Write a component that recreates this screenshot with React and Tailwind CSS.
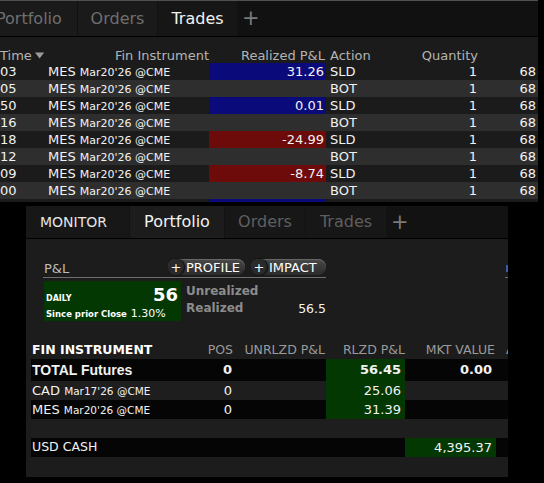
import React from "react";

const trades = [
  { time: "03", action: "SLD", pnl: "31.26", tone: "blue" },
  { time: "05", action: "BOT", pnl: "", tone: "" },
  { time: "50", action: "SLD", pnl: "0.01", tone: "blue" },
  { time: "16", action: "BOT", pnl: "", tone: "" },
  { time: "18", action: "SLD", pnl: "-24.99", tone: "red" },
  { time: "12", action: "BOT", pnl: "", tone: "" },
  { time: "09", action: "SLD", pnl: "-8.74", tone: "red" },
  { time: "00", action: "BOT", pnl: "", tone: "" },
];

const toneBg = { blue: "bg-[#0b0a7a]", red: "bg-[#6d0b0b]", "": "" };

// trades window (top, partly cut off on the left)
function TradesPanel() {
  return (
    <div className="w-[538px] h-[202px] overflow-hidden bg-[#1b1b1b]">
      <div className="flex h-[37px] gap-[1px] bg-[#111111] border-t border-t-[#505050] border-b border-b-black">
        <div className="ml-[-13px] w-[90px] flex items-center pl-[9px] bg-[#1a1a1a] text-[16px] text-[#6f6f6f]">
          Portfolio
        </div>
        <div className="w-[79px] flex items-center justify-center bg-[#1a1a1a] text-[16px] text-[#6f6f6f]">
          Orders
        </div>
        <div className="w-[79px] flex items-center justify-center bg-[#161616] text-[16px] text-[#f2f2f2]">
          Trades
        </div>
        <div className="flex items-center pl-[4px] text-[21px] text-[#7a7a7a] leading-none">
          +
        </div>
      </div>

      <div className="flex h-[26px] items-end pb-[0px] text-[13px] leading-[15px] text-[#b4b4b4]">
        <div className="w-[44px] flex items-center gap-[3px]">
          <span>Time</span>
          <svg width="11" height="7" viewBox="0 0 11 7">
            <path d="M0 0 H11 L5.5 7 Z" fill="#9a9a9a" />
          </svg>
        </div>
        <div className="w-[165px] text-right">Fin Instrument</div>
        <div className="w-[117px] text-right pr-[1px]">Realized P&amp;L</div>
        <div className="w-[94px] pl-[4px]">Action</div>
        <div className="w-[60px] text-right pr-[2px]">Quantity</div>
        <div className="w-[58px]"></div>
      </div>

      {trades.map((r, i) => (
        <div
          key={i}
          className={`flex h-[17px] items-center text-[13px] leading-[17px] text-[#f2f2f2] ${
            i % 2 === 0 ? "bg-[#1b1b1b]" : "bg-[#2e2e2e]"
          }`}
        >
          <div className="w-[44px]">{r.time}</div>
          <div className="w-[165px] pl-[4px] whitespace-nowrap">
            MES <span className="text-[11px]">Mar20'26 @CME</span>
          </div>
          <div className={`w-[117px] h-full text-right pr-[2px] ${toneBg[r.tone]}`}>{r.pnl}</div>
          <div className="w-[94px] pl-[4px]">{r.action}</div>
          <div className="w-[60px] text-right pr-[3px]">1</div>
          <div className="w-[58px] text-right pr-[2px]">68</div>
        </div>
      ))}
      <div className="flex h-[3px] bg-[#1b1b1b]">
        <div className="w-[209px]"></div>
        <div className="w-[117px] bg-[#0b0a7a]"></div>
      </div>
    </div>
  );
}

function PillButton({ label, width }) {
  return (
    <div
      className={`${width} h-[16px] flex items-center rounded-full bg-gradient-to-b from-[#4a4a4a] to-[#2b2b2b] shadow-[inset_0_1px_0_#666] text-white text-[13px] leading-none`}
    >
      <span className="w-[16px] h-[16px] flex items-center justify-center rounded-full bg-[#2a2a2a] shadow-[1px_0_2px_#000] text-[13px]">
        +
      </span>
      <span className="ml-[2px]">{label}</span>
    </div>
  );
}

const rowBase = "flex items-center text-[13px] text-[#f2f2f2]";

// portfolio window (bottom)
function PortfolioPanel() {
  return (
    <div className="mt-[4px] ml-[26px] w-[482px] h-[271px] overflow-hidden bg-[#1c1c1c]">
      <div className="flex h-[33px] gap-[1px] bg-[#121212] border-b border-b-black">
        <div className="w-[103px] flex items-center pl-[14px] bg-[#171717] text-[14px] text-[#e6e6e6]">
          MONITOR
        </div>
        <div className="w-[94px] flex items-center justify-center bg-[#1c1c1c] text-[16px] text-[#f2f2f2]">
          Portfolio
        </div>
        <div className="w-[80px] flex items-center justify-center bg-[#171717] text-[16px] text-[#5f5f5f]">
          Orders
        </div>
        <div className="w-[80px] flex items-center justify-center bg-[#171717] text-[16px] text-[#5f5f5f]">
          Trades
        </div>
        <div className="flex items-center pl-[4px] text-[21px] text-[#7a7a7a] leading-none">
          +
        </div>
      </div>

      <div className="flex mt-[20px] ml-[17px]">
        <div className="w-[283px]">
          <div className="flex h-[19px] items-center border-b border-b-[#6e6e6e]">
            <span className="text-[13px] text-[#bdbdbd] pl-[1px] pt-[1px]">P&amp;L</span>
            <div className="ml-auto flex gap-[6px] pb-[2px]">
              <PillButton label="PROFILE" width="w-[77px]" />
              <PillButton label="IMPACT" width="w-[75px]" />
            </div>
          </div>

          <div className="flex mt-[3px]">
            <div className="ml-[1px] w-[137px] h-[40px] bg-[#033803] px-[2px] pt-[5px] text-white">
              <div className="flex items-end justify-between h-[18px]">
                <span className="text-[8px] font-bold leading-none pb-[1px]">DAILY</span>
                <span className="text-[18px] font-bold leading-none pr-[1px]">56</span>
              </div>
              <div className="flex items-baseline gap-[4px] mt-[2px]">
                <span className="text-[8.5px] font-bold">Since prior Close</span>
                <span className="text-[11px]">1.30%</span>
              </div>
            </div>
            <div className="ml-[5px] flex-1 pt-[2px] text-[12px] leading-[17px]">
              <div className="font-bold text-[#8c8c8c]">Unrealized</div>
              <div className="flex justify-between">
                <span className="font-bold text-[#8c8c8c]">Realized</span>
                <span className="text-[12.5px] text-[#f2f2f2]">56.5</span>
              </div>
            </div>
          </div>
        </div>
        <div className="ml-[179px] w-[3px] h-[19px] flex items-center border-b border-b-[#6e6e6e]">
          <div className="ml-[1px] w-[2px] h-[7px] bg-[#3c5aa6]"></div>
        </div>
      </div>

      <div className="mt-[21px] pl-[5px]">
        <div className="flex h-[17px] items-center text-[12.5px] text-[#9a9a9a] whitespace-nowrap">
          <div className="w-[164px] pl-[1px] font-bold text-white">FIN INSTRUMENT</div>
          <div className="w-[41px] text-right pr-[3px]">POS</div>
          <div className="w-[90px] text-right pr-[1px]">UNRLZD P&amp;L</div>
          <div className="w-[79px] text-right">RLZD P&amp;L</div>
          <div className="w-[91px] text-right pr-[1px]">MKT VALUE</div>
          <div className="w-[12px] pl-[10px] overflow-hidden">A</div>
        </div>

        <div className={`${rowBase} h-[22px] bg-[#050505] font-bold`}>
          <div className="w-[164px] pl-[1px] font-['Liberation_Sans'] text-[14px]">TOTAL Futures</div>
          <div className="w-[41px] text-right pr-[4px]">0</div>
          <div className="w-[90px]"></div>
          <div className="w-[79px] h-full flex items-center justify-end pr-[4px] bg-[#033803]">56.45</div>
          <div className="w-[91px] text-right pr-[4px]">0.00</div>
        </div>
        <div className={`${rowBase} h-[19px] bg-[#1e1e1e]`}>
          <div className="w-[164px] pl-[1px] whitespace-nowrap">
            CAD <span className="text-[10.5px]">Mar17'26 @CME</span>
          </div>
          <div className="w-[41px] text-right pr-[4px]">0</div>
          <div className="w-[90px]"></div>
          <div className="w-[79px] h-full flex items-center justify-end pr-[4px] bg-[#033803]">25.06</div>
          <div className="w-[91px]"></div>
        </div>
        <div className={`${rowBase} h-[19px] bg-[#050505]`}>
          <div className="w-[164px] pl-[1px] whitespace-nowrap">
            MES <span className="text-[10.5px]">Mar20'26 @CME</span>
          </div>
          <div className="w-[41px] text-right pr-[4px]">0</div>
          <div className="w-[90px]"></div>
          <div className="w-[79px] h-full flex items-center justify-end pr-[4px] bg-[#033803]">31.39</div>
          <div className="w-[91px]"></div>
        </div>
        <div className="h-[19px] bg-[#1e1e1e]"></div>
        <div className={`${rowBase} h-[19px] bg-[#050505]`}>
          <div className="w-[164px] pl-[1px] text-[12.5px]">USD CASH</div>
          <div className="w-[41px]"></div>
          <div className="w-[90px]"></div>
          <div className="w-[79px]"></div>
          <div className="w-[91px] h-full flex items-center justify-end pr-[4px] bg-[#033803]">4,395.37</div>
        </div>
      </div>
    </div>
  );
}

export default function App() {
  return (
    <div className="w-[544px] h-[483px] overflow-hidden bg-black font-['DejaVu_Sans',sans-serif]">
      <TradesPanel />
      <PortfolioPanel />
    </div>
  );
}
